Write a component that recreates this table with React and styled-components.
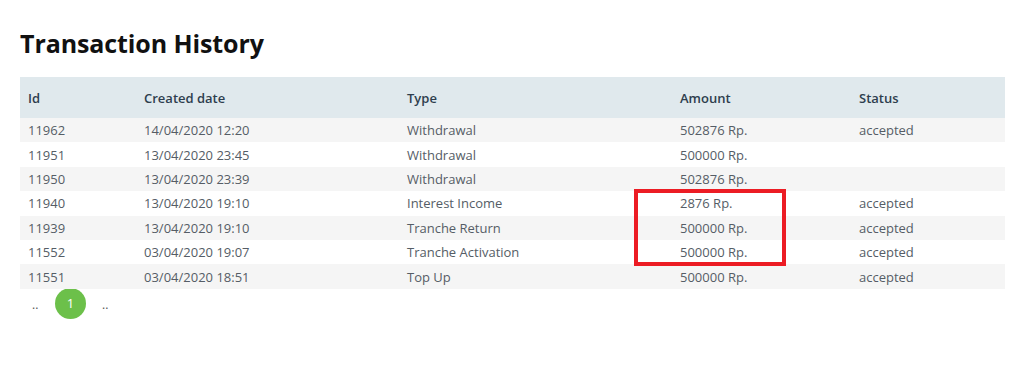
import React from 'react';
import styled, { createGlobalStyle } from 'styled-components';

const GlobalStyle = createGlobalStyle`
  body {
    margin: 0;
    background: #ffffff;
    font-family: "Open Sans", "Noto Sans", sans-serif;
  }
`;

const Page = styled.div`
  padding: 29px 19px 0 20px;
  width: 1024px;
  box-sizing: border-box;
`;

const Heading = styled.h1`
  margin: 0 0 19px 0;
  font-size: 25px;
  line-height: 29px;
  font-weight: 700;
  color: #111;
  letter-spacing: -0.1px;
`;

const TableWrap = styled.div`
  position: relative;
`;

const Table = styled.table`
  width: 985px;
  border-collapse: collapse;
  table-layout: fixed;
  font-size: 13px;
`;

const HeadCell = styled.th`
  box-sizing: border-box;
  height: 41px;
  padding: 0 8px;
  text-align: left;
  font-weight: 600;
  color: #2e3e4e;
  background: #e0e9ed;
  width: ${(p) => p.$w}px;
`;

const Row = styled.tr`
  background: ${(p) => (p.$odd ? '#f5f5f5' : '#ffffff')};
  height: 24.4px;
`;

const Cell = styled.td`
  padding: 0 8px;
  color: #555d66;
  white-space: nowrap;
`;

const Highlight = styled.div`
  position: absolute;
  left: 614px;
  top: 112px;
  width: 144px;
  height: 69px;
  border: 4px solid #ec1c24;
  pointer-events: none;
`;

const Pager = styled.div`
  display: flex;
  align-items: center;
  height: 31px;
  margin-top: -1px;
`;

const Dots = styled.span`
  font-size: 12px;
  color: #555;
  width: ${(p) => p.$w}px;
  padding-left: ${(p) => p.$pl}px;
  box-sizing: border-box;
  line-height: 31px;
  padding-top: 3px;
`;

const PageBubble = styled.span`
  width: 31px;
  height: 31px;
  border-radius: 50%;
  background: #6cc04a;
  color: #fff;
  font-size: 13px;
  display: flex;
  align-items: center;
  justify-content: center;
`;

const columns = [
  { label: 'Id', w: 116 },
  { label: 'Created date', w: 263 },
  { label: 'Type', w: 273 },
  { label: 'Amount', w: 179 },
  { label: 'Status', w: 154 },
];

const rows = [
  ['11962', '14/04/2020 12:20', 'Withdrawal', '502876 Rp.', 'accepted'],
  ['11951', '13/04/2020 23:45', 'Withdrawal', '500000 Rp.', ''],
  ['11950', '13/04/2020 23:39', 'Withdrawal', '502876 Rp.', ''],
  ['11940', '13/04/2020 19:10', 'Interest Income', '2876 Rp.', 'accepted'],
  ['11939', '13/04/2020 19:10', 'Tranche Return', '500000 Rp.', 'accepted'],
  ['11552', '03/04/2020 19:07', 'Tranche Activation', '500000 Rp.', 'accepted'],
  ['11551', '03/04/2020 18:51', 'Top Up', '500000 Rp.', 'accepted'],
];

export default function App() {
  return (
    <Page>
      <GlobalStyle />
      <Heading>Transaction History</Heading>
      <TableWrap>
        <Table>
          <thead>
            <tr>
              {columns.map((c) => (
                <HeadCell key={c.label} $w={c.w}>{c.label}</HeadCell>
              ))}
            </tr>
          </thead>
          <tbody>
            {rows.map((r, i) => (
              <Row key={r[0]} $odd={i % 2 === 0}>
                {r.map((v, j) => (
                  <Cell key={j}>{v}</Cell>
                ))}
              </Row>
            ))}
          </tbody>
        </Table>
        <Highlight />
      </TableWrap>
      <Pager>
        <Dots $w={35} $pl={12}>..</Dots>
        <PageBubble>1</PageBubble>
        <Dots $w={40} $pl={16}>..</Dots>
      </Pager>
    </Page>
  );
}
